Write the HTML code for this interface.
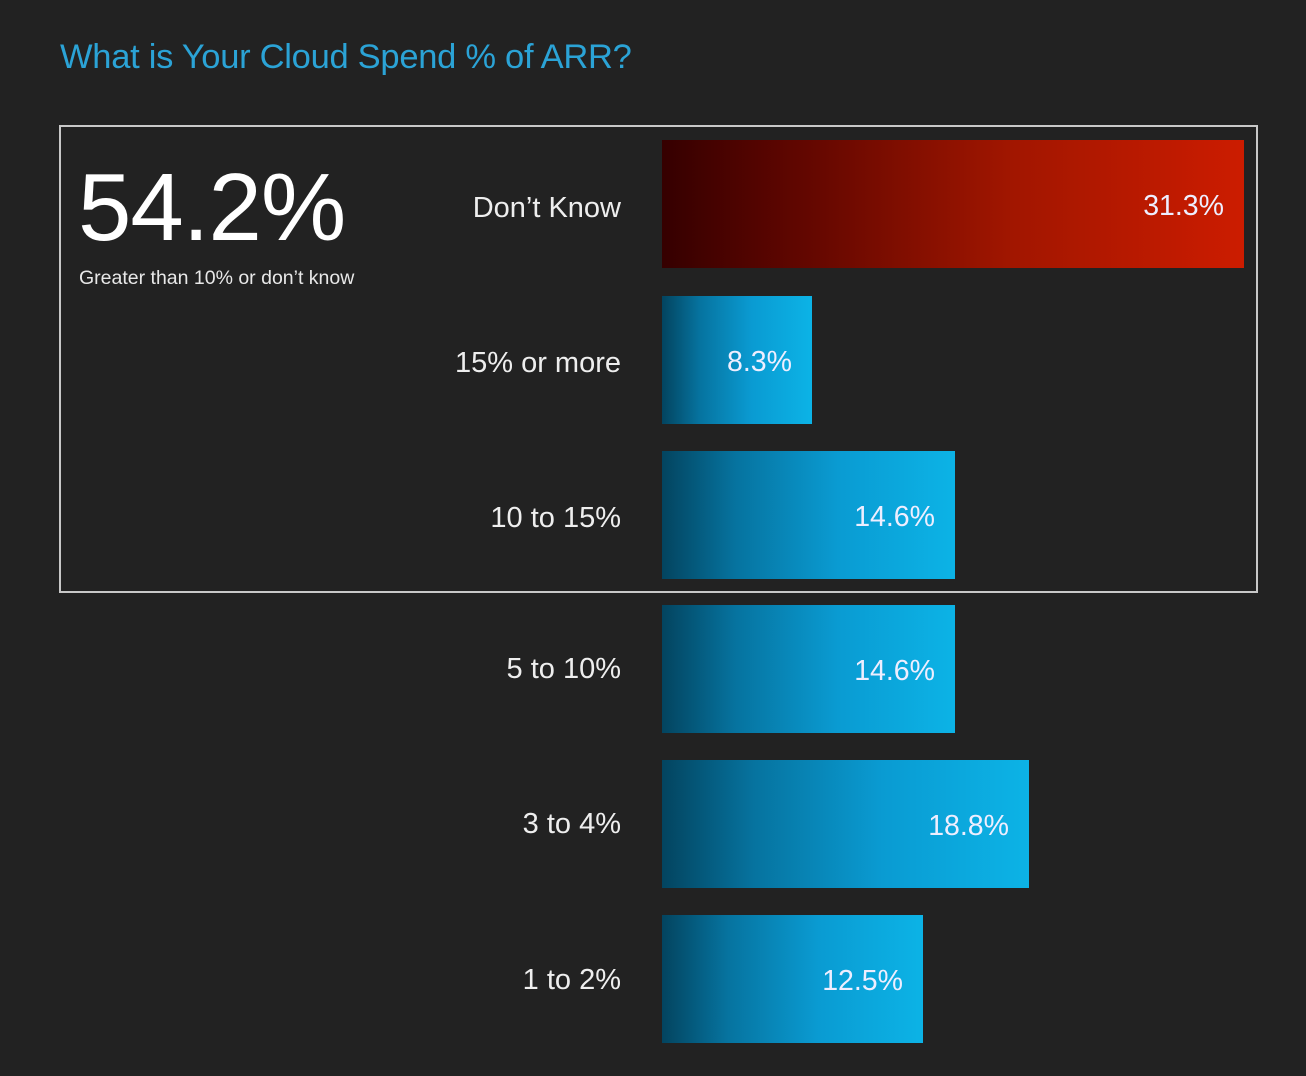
<!DOCTYPE html>
<html><head><meta charset="utf-8"><style>
body{margin:0;width:1306px;height:1076px;background:#222;font-family:"Liberation Sans",sans-serif;position:relative;overflow:hidden}
.t{position:absolute;left:60px;top:38px;font-size:34.5px;color:#2ba3d6;letter-spacing:-0.28px}
.box{position:absolute;left:59px;top:125px;width:1195px;height:464px;border:2px solid #c8c8c8}
.big{position:absolute;left:78px;top:153px;font-size:96px;color:#fff;line-height:110px;letter-spacing:-1px}
.sub{position:absolute;left:79px;top:267px;font-size:19.5px;color:#e8e8e8}
.lab{position:absolute;right:685px;font-size:29px;color:#eee;line-height:30px}
.bar{position:absolute;left:662px;height:128px;background:linear-gradient(90deg,#03445f 0%,#06739f 25%,#0a9bd2 60%,#0cb3e6 100%)}
.red{background:linear-gradient(90deg,#350000 0%,#5a0500 20%,#a11600 60%,#cc1c00 100%)}
.v{position:absolute;right:20px;top:50%;transform:translateY(-42%);font-size:28.5px;color:#eef}
</style></head><body>
<div class="t">What is Your Cloud Spend % of ARR?</div>
<div class="box"></div>
<div class="big">54.2%</div>
<div class="sub">Greater than 10% or don’t know</div>
<div class="lab" style="top:193px">Don’t Know</div>
<div class="bar red" style="top:140px;width:582px"><span class="v">31.3%</span></div>
<div class="lab" style="top:348px">15% or more</div>
<div class="bar" style="top:296px;width:150px"><span class="v">8.3%</span></div>
<div class="lab" style="top:503px">10 to 15%</div>
<div class="bar" style="top:451px;width:293px"><span class="v">14.6%</span></div>
<div class="lab" style="top:654px">5 to 10%</div>
<div class="bar" style="top:605px;width:293px"><span class="v">14.6%</span></div>
<div class="lab" style="top:809px">3 to 4%</div>
<div class="bar" style="top:760px;width:367px"><span class="v">18.8%</span></div>
<div class="lab" style="top:965px">1 to 2%</div>
<div class="bar" style="top:915px;width:261px"><span class="v">12.5%</span></div>
</body></html>
